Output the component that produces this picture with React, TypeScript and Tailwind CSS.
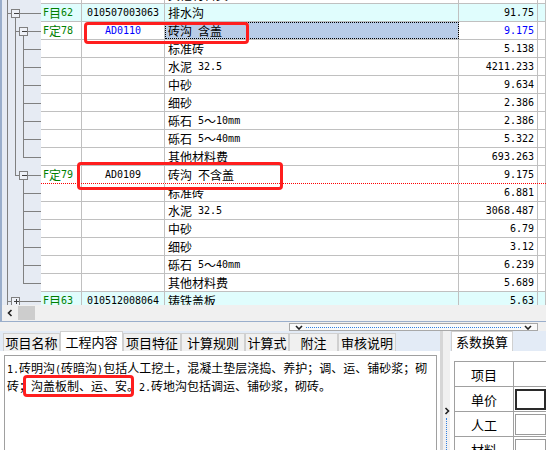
import React from 'react';

type TreeSpec = {
  l0: 'line' | 'minus' | 'plus';
  l1?: 'line' | 'node' | 'lastnode';
  l2?: 'child' | 'last';
};

type Row = {
  tree: TreeSpec;
  c1?: string;
  c2?: string;
  c3?: string;
  c4?: string;
  item?: boolean;
  blue2?: boolean;
  blue4?: boolean;
  selected?: boolean;
  redLine?: boolean;
};

const rows: Row[] = [
  {tree: {l0: 'line'}, c3: '其他材料费', c4: '12.5'},
  {tree: {l0: 'minus'}, c1: 'F目62', c2: '010507003063', c3: '排水沟', c4: '91.75', item: true},
  {tree: {l0: 'line', l1: 'node'}, c1: 'F定78', c2: 'AD0110', c3: '砖沟 含盖', c4: '9.175', blue2: true, blue4: true, selected: true},
  {tree: {l0: 'line', l1: 'line', l2: 'child'}, c3: '标准砖', c4: '5.138'},
  {tree: {l0: 'line', l1: 'line', l2: 'child'}, c3: '水泥 32.5', c4: '4211.233'},
  {tree: {l0: 'line', l1: 'line', l2: 'child'}, c3: '中砂', c4: '9.634'},
  {tree: {l0: 'line', l1: 'line', l2: 'child'}, c3: '细砂', c4: '2.386'},
  {tree: {l0: 'line', l1: 'line', l2: 'child'}, c3: '砾石 5～10mm', c4: '2.386'},
  {tree: {l0: 'line', l1: 'line', l2: 'child'}, c3: '砾石 5～40mm', c4: '5.322'},
  {tree: {l0: 'line', l1: 'line', l2: 'last'}, c3: '其他材料费', c4: '693.263'},
  {tree: {l0: 'line', l1: 'lastnode'}, c1: 'F定79', c2: 'AD0109', c3: '砖沟 不含盖', c4: '9.175', redLine: true},
  {tree: {l0: 'line', l2: 'child'}, c3: '标准砖', c4: '6.881'},
  {tree: {l0: 'line', l2: 'child'}, c3: '水泥 32.5', c4: '3068.487'},
  {tree: {l0: 'line', l2: 'child'}, c3: '中砂', c4: '6.79'},
  {tree: {l0: 'line', l2: 'child'}, c3: '细砂', c4: '3.12'},
  {tree: {l0: 'line', l2: 'child'}, c3: '砾石 5～40mm', c4: '6.239'},
  {tree: {l0: 'line', l2: 'last'}, c3: '其他材料费', c4: '5.689'},
  {tree: {l0: 'plus'}, c1: 'F目63', c2: '010512008064', c3: '铸铁盖板', c4: '5.63', item: true},
];

const tabs = [
  {label: '项目名称', w: 'w-[57px]'},
  {label: '工程内容', w: 'w-[63px]', active: true},
  {label: '项目特征', w: 'w-[58px]'},
  {label: '计算规则', w: 'w-[64px]'},
  {label: '计算式', w: 'w-[44px]'},
  {label: '附注', w: 'w-[49px]'},
  {label: '审核说明', w: 'w-[58px]'},
];

// ascii runs get the half-width mono face, the rest stays CJK
const Txt = ({s}: {s: string}) => (
  <>
    {s
      .split(/([\x20-\x7e]+)/)
      .filter(Boolean)
      .map((p, i) =>
        /^[\x20-\x7e]+$/.test(p) ? (
          <span key={i} className="whitespace-pre font-['DejaVu_Sans_Mono',monospace] text-[10px]">
            {p}
          </span>
        ) : (
          <span key={i}>{p}</span>
        )
      )}
  </>
);

const G = '#808080';

const Box = ({cx, plus}: {cx: number; plus?: boolean}) => (
  <>
    <rect x={cx - 4} y={5} width={8} height={8} fill="#eef1f7" stroke={G} />
    <line x1={cx - 2} y1={9} x2={cx + 3} y2={9} stroke="#404040" />
    {plus && <line x1={cx + 0.5} y1={6.5} x2={cx + 0.5} y2={11.5} stroke="#404040" />}
  </>
);

const Tree = ({spec}: {spec: TreeSpec}) => (
  <svg width={39} height={18} shapeRendering="crispEdges" className="block">
    <line x1={5.5} y1={0} x2={5.5} y2={18} stroke={G} />
    {spec.l0 !== 'line' && (
      <>
        <line x1={5.5} y1={9.5} x2={9.5} y2={9.5} stroke={G} />
        <line x1={17.5} y1={9.5} x2={39} y2={9.5} stroke={G} />
        {spec.l0 === 'minus' && <line x1={13.5} y1={13} x2={13.5} y2={18} stroke={G} />}
        <Box cx={13.5} plus={spec.l0 === 'plus'} />
      </>
    )}
    {spec.l1 === 'line' && <line x1={13.5} y1={0} x2={13.5} y2={18} stroke={G} />}
    {(spec.l1 === 'node' || spec.l1 === 'lastnode') && (
      <>
        <line x1={13.5} y1={0} x2={13.5} y2={spec.l1 === 'node' ? 18 : 9.5} stroke={G} />
        <line x1={13.5} y1={9.5} x2={17.5} y2={9.5} stroke={G} />
        <line x1={25.5} y1={9.5} x2={39} y2={9.5} stroke={G} />
        <line x1={21.5} y1={13} x2={21.5} y2={18} stroke={G} />
        <Box cx={21.5} />
      </>
    )}
    {spec.l2 && (
      <>
        <line x1={21.5} y1={0} x2={21.5} y2={spec.l2 === 'child' ? 18 : 9.5} stroke={G} />
        <line x1={21.5} y1={9.5} x2={39} y2={9.5} stroke={G} />
      </>
    )}
  </svg>
);

const GridRow = ({r}: {r: Row}) => {
  const cell = 'h-full flex items-center border-r border-[#c0c0c0]';
  return (
    <div className={`flex h-[18px] ${r.item ? 'bg-[#e0fdfd]' : 'bg-white'}`}>
      <div className="w-[39px] shrink-0 bg-[#e6ebf3]">
        <Tree spec={r.tree} />
      </div>
      <div
        className={`flex h-full flex-1 border-b ${
          r.redLine ? 'border-dotted border-[#ff0000]' : 'border-[#c0c0c0]'
        }`}
      >
        <div className={`${cell} w-[41px] shrink-0 pl-[2px] text-[#008000]`}>{r.c1 && <Txt s={r.c1} />}</div>
        <div className={`${cell} w-[83px] shrink-0 justify-center ${r.blue2 ? 'text-[#0000ff]' : ''}`}>
          {r.c2 && <Txt s={r.c2} />}
        </div>
        <div
          className={`${cell} w-[294px] shrink-0 pl-[3px] ${
            r.selected ? 'bg-[#b8cce8] outline outline-1 outline-dotted outline-black -outline-offset-1' : ''
          }`}
        >
          {r.c3 && <Txt s={r.c3} />}
        </div>
        <div className={`${cell} w-[79px] shrink-0 justify-end pr-[3px] ${r.blue4 ? 'text-[#0000ff]' : ''}`}>
          {r.c4 && <Txt s={r.c4} />}
        </div>
        <div className={`${cell} flex-1`} />
      </div>
    </div>
  );
};

const Chevron = ({dir}: {dir: 'down' | 'left' | 'right'}) => {
  const d = dir === 'down' ? 'M1 1 L4 4 L7 1' : dir === 'left' ? 'M4.5 1 L1.5 4 L4.5 7' : 'M1.5 1 L4.5 4 L1.5 7';
  const [w, h] = dir === 'down' ? [8, 5] : [6, 8];
  return (
    <svg width={w} height={h} className="block shrink-0">
      <path d={d} fill="none" stroke="#202020" strokeWidth={1.6} />
    </svg>
  );
};

const coefRows = ['项目', '单价', '人工', '材料'];

export default function App() {
  return (
    <div className="relative h-[450px] w-[546px] overflow-hidden bg-[#f0f0f0] font-['Noto_Sans_CJK_SC','Noto_Sans',sans-serif] text-[12px] leading-none text-black">
      {/* grid */}
      <div className="flex h-[322px] flex-col border-b border-l-2 border-[#9aaecb]">
        <div className="flex-1 overflow-hidden">
          <div className="-mt-[14px]">
            {rows.map((r, i) => (
              <GridRow key={i} r={r} />
            ))}
          </div>
        </div>
        <div className="flex h-[16px] shrink-0 items-center bg-[#f0f0f0]">
          <div className="flex w-[16px] justify-center">
            <Chevron dir="left" />
          </div>
          <div className="h-[14px] w-[17px] bg-[#cdcdcd]" />
        </div>
      </div>

      {/* collapse bar */}
      <div className="h-[9px] pl-[289px] pt-[1px]">
        <div className="flex h-[8px] w-[249px] items-center border border-[#a8a8a8] bg-[#fafafa] px-[5px]">
          <Chevron dir="down" />
          <div className="mx-[3px] flex-1 border-t border-dotted border-[#2f80e0]" />
          <Chevron dir="down" />
        </div>
      </div>

      {/* bottom panels */}
      <div className="flex h-[119px]">
        <div className="flex w-[440px] flex-col bg-white">
          <div className="flex h-[22px] items-end bg-[#e3ebf6] pl-[3px]">
            {tabs.map(t => (
              <div
                key={t.label}
                className={`${t.w} flex items-center justify-center border-x border-t border-[#d0d0d0] text-[13px] ${
                  t.active ? 'h-[20px] bg-white' : 'h-[18px] bg-[#f0f0f0]'
                }`}
              >
                {t.label}
              </div>
            ))}
          </div>
          <div className="flex-1 pl-[4px] pr-[3px] pt-[4px]">
            <div className="h-[120px] border border-[#a0a0a0] pl-[2px] pt-[4px] leading-[16px]">
              <div className="whitespace-nowrap">
                <Txt s="1.砖明沟(砖暗沟)包括人工挖土，混凝土垫层浇捣、养护；调、运、铺砂浆；砌" />
              </div>
              <div className="whitespace-nowrap">
                <Txt s="砖；沟盖板制、运、安。2.砖地沟包括调运、铺砂浆，砌砖。" />
              </div>
            </div>
          </div>
        </div>

        <div className="flex w-[10px] flex-col items-center border-l-[3px] border-[#d6d6d6] bg-[#f0f0f0] pt-[76px]">
          <Chevron dir="right" />
          <div className="mt-[3px] flex-1 border-l border-dotted border-[#2f80e0]" />
        </div>

        <div className="flex flex-1 flex-col bg-white">
          <div className="flex h-[22px] items-end bg-[#e3ebf6] pl-[1px]">
            <div className="flex h-[20px] w-[62px] items-center justify-center border-x border-t border-[#d0d0d0] bg-white text-[13px]">
              系数换算
            </div>
          </div>
          <div className="pl-[4px] pt-[10px]">
            <div className="border-l border-t border-[#a0a0a0]">
              {coefRows.map((c, i) => (
                <div key={c} className="flex h-[25px] border-b border-[#a0a0a0]">
                  <div className="flex w-[59px] items-center justify-center border-r border-[#a0a0a0] text-[13px]">
                    {c}
                  </div>
                  <div className="flex-1 pl-[1px] pt-[2px]">
                    {i === 1 && <div className="h-[21px] border-2 border-[#2a2a2a]" />}
                    {i > 1 && <div className="h-[21px] border border-[#9a9a9a]" />}
                  </div>
                </div>
              ))}
            </div>
          </div>
        </div>
      </div>

      {/* red highlight marks */}
      <div className="absolute left-[84px] top-[22px] h-[22px] w-[165px] rounded-[4px] border-[3px] border-[#ff1e1e]" />
      <div className="absolute left-[77px] top-[162px] h-[28px] w-[206px] rounded-[4px] border-[3px] border-[#ff1e1e]" />
      <div className="absolute left-[23px] top-[375px] h-[22px] w-[111px] rounded-[4px] border-[3px] border-[#ff1e1e]" />
    </div>
  );
}
